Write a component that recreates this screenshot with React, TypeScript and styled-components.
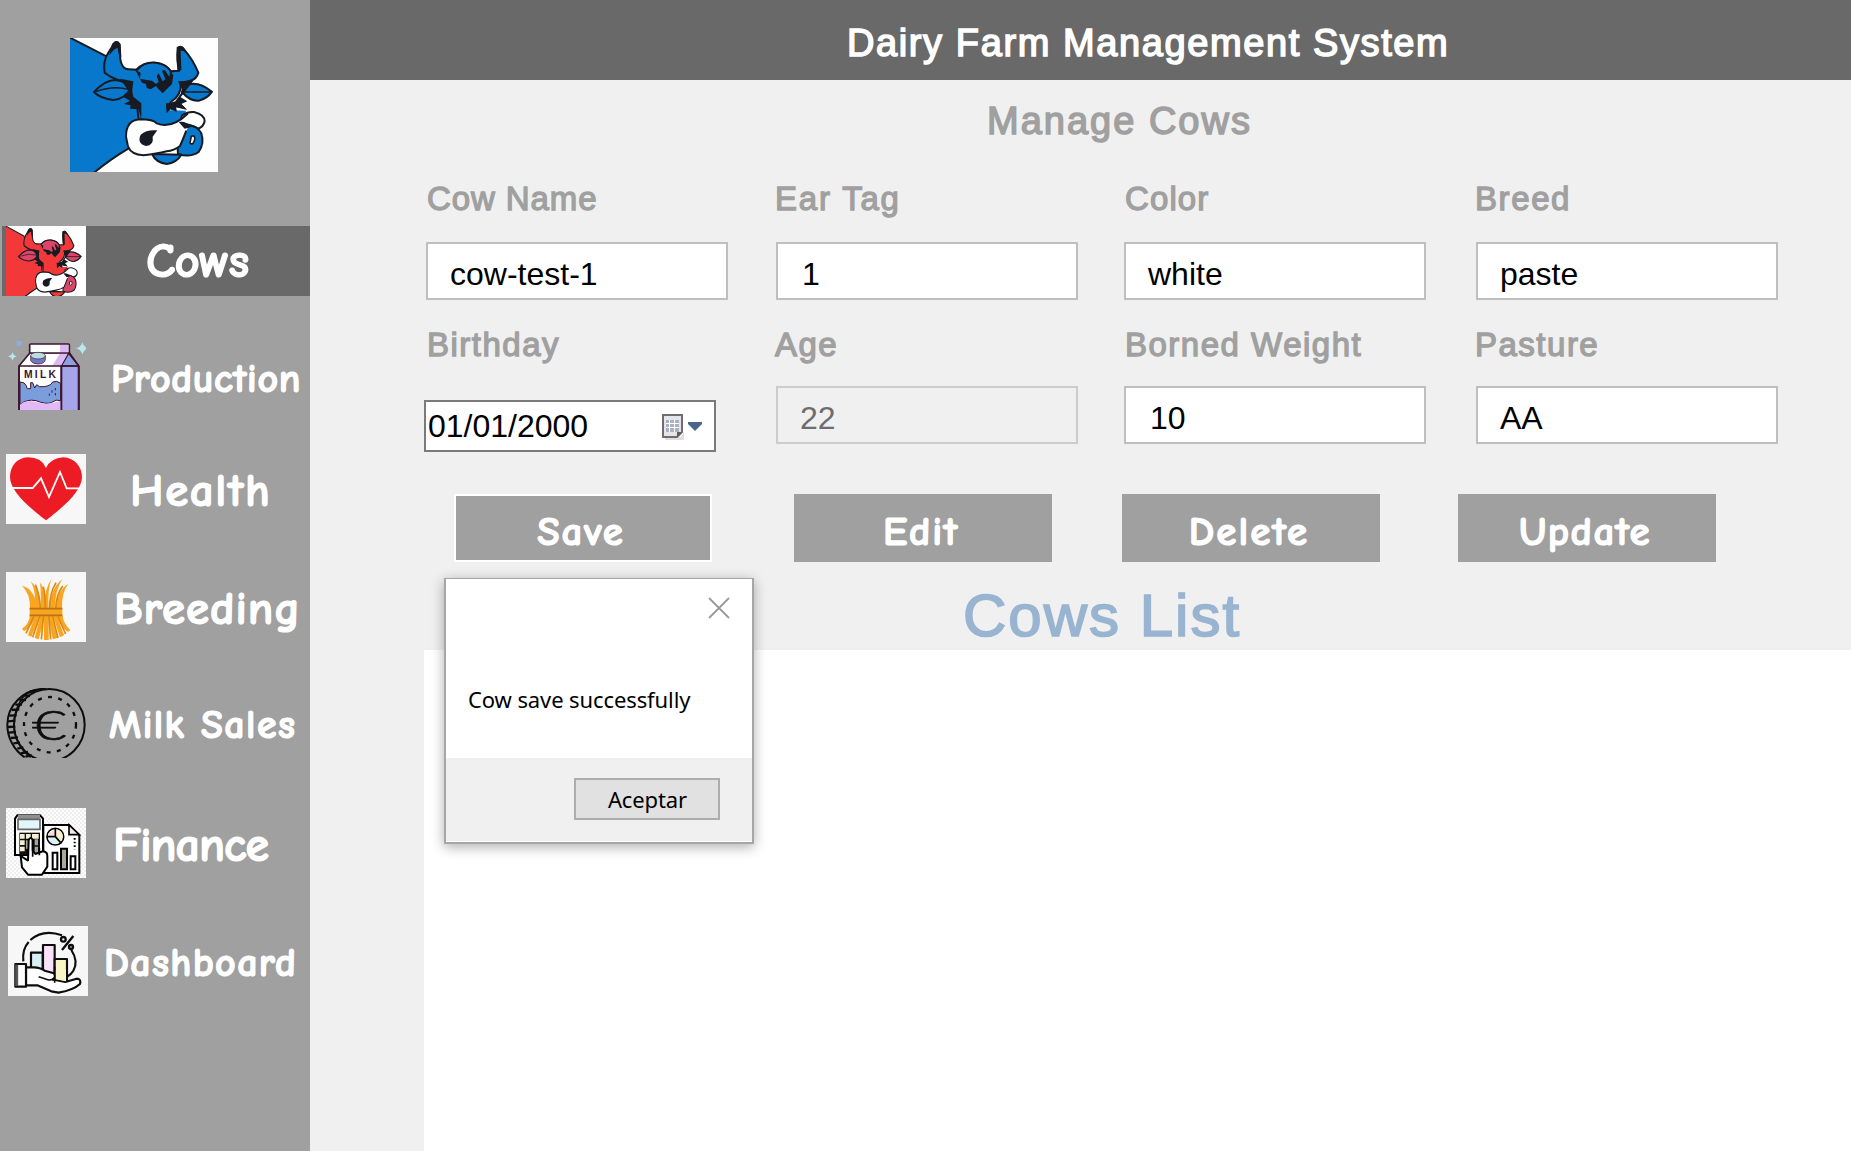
import React from 'react';
import styled, { createGlobalStyle } from 'styled-components';

const sans = '"Liberation Sans", Arial, sans-serif';
const comic = '"Comic Sans MS", "Comic Neue", Roboto, sans-serif';
const dialogFont = '"Segoe UI", "Noto Sans", "Open Sans", sans-serif';

const GlobalStyle = createGlobalStyle`
  * { box-sizing: border-box; }
  body { margin: 0; background: #f0f0f0; overflow: hidden; }
`;

const Page = styled.div`
  display: flex;
  width: 1851px;
  height: 1151px;
  overflow: hidden;
  position: relative;
  font-family: ${sans};
`;

const Sidebar = styled.nav`
  width: 310px;
  flex: none;
  background: #a0a0a0;
  display: flex;
  flex-direction: column;
`;

const Logo = styled.div`
  width: 148px;
  height: 134px;
  margin: 38px 0 54px 70px;
  background: #fefefe;
  svg { display: block; }
`;

const NavItem = styled.a<{ $gap?: number; $active?: boolean; $indent?: number }>`
  display: flex;
  height: 70px;
  flex: none;
  margin-left: 2px;
  margin-top: ${p => p.$gap ?? 0}px;
  padding-left: ${p => p.$indent ?? 4}px;
  background: ${p => (p.$active ? '#696969' : 'transparent')};
`;

const NavIcon = styled.span<{ $bg: string }>`
  width: 80px;
  height: 70px;
  flex: none;
  background: ${p => p.$bg};
  svg { display: block; }
`;

const NavLabel = styled.span<{ $size: number; $left: number; $drop?: number; $track?: number }>`
  padding-left: ${p => p.$left}px;
  padding-top: ${p => p.$drop ?? 0}px;
  font-family: ${comic};
  font-weight: 700;
  font-size: ${p => p.$size}px;
  line-height: 70px;
  height: 70px;
  letter-spacing: ${p => p.$track ?? 0}px;
  color: #fff;
  -webkit-text-stroke: 1.2px #fff;
  white-space: nowrap;
`;

const Main = styled.main`
  flex: 1;
  display: flex;
  flex-direction: column;
  background: #f0f0f0;
`;

const Header = styled.header`
  height: 80px;
  flex: none;
  background: #696969;
  padding: 18px 0 0 537px;
`;

const Title = styled.h1<{ $color: string; $track: number }>`
  margin: 0;
  font-size: 38px;
  font-weight: 400;
  line-height: 51px;
  color: ${p => p.$color};
  -webkit-text-stroke: 1.5px ${p => p.$color};
  letter-spacing: ${p => p.$track}px;
  white-space: nowrap;
`;

const PageTitle = styled.div`
  padding: 16px 0 0 677px;
  height: 98px;
`;

const Form = styled.form`
  display: grid;
  grid-template-columns: 350px 348px 352px 302px;
  grid-template-rows: 146px 122px;
  padding-left: 116px;
  height: 316px;
`;

const Field = styled.div`
  display: flex;
  flex-direction: column;
`;

const Label = styled.label<{ $nudge?: number; $track?: number }>`
  height: 40px;
  line-height: 42px;
  font-size: 33px;
  margin-left: ${p => p.$nudge ?? 0}px;
  color: #a0a0a0;
  -webkit-text-stroke: 1.3px #a0a0a0;
  letter-spacing: ${p => p.$track ?? 1.5}px;
  white-space: nowrap;
`;

const TextBox = styled.div<{ $top: number; $disabled?: boolean; $left?: number }>`
  width: 302px;
  height: 58px;
  margin-top: ${p => p.$top}px;
  padding: 3px 0 0 ${p => p.$left ?? 22}px;
  border: 2px solid ${p => (p.$disabled ? '#cccccc' : '#bfbfbf')};
  background: ${p => (p.$disabled ? '#f0f0f0' : '#fff')};
  color: ${p => (p.$disabled ? '#6d6d6d' : '#000')};
  font-size: 32px;
  line-height: 54px;
`;

const DateBox = styled.div`
  display: flex;
  justify-content: space-between;
  width: 292px;
  height: 52px;
  margin: 36px 0 0 -2px;
  padding: 0 10px 0 2px;
  border: 2px solid #7a7a7a;
  background: #fff;
  font-size: 32px;
  line-height: 49px;
`;

const DateIcon = styled.svg`
  margin-top: 10px;
`;

const Buttons = styled.div`
  display: flex;
  padding-left: 144px;
  height: 68px;
`;

const Button = styled.button<{ $left?: number; $focus?: boolean; $track?: number }>`
  width: 258px;
  height: 68px;
  margin: 0 0 0 ${p => p.$left ?? 0}px;
  padding: 6px 4px 0 0;
  border: ${p => (p.$focus ? '2px solid #fff' : '0')};
  background: #a0a0a0;
  color: #fff;
  font-family: ${comic};
  font-weight: 700;
  font-size: 41px;
  -webkit-text-stroke: 1.2px #fff;
  letter-spacing: ${p => p.$track ?? 1.3}px;
`;

const ListTitle = styled.h2`
  margin: 0;
  padding: 19px 0 0 653px;
  height: 88px;
  font-size: 60px;
  line-height: 70px;
  font-weight: 400;
  color: #99b4d1;
  -webkit-text-stroke: 1.7px #99b4d1;
  letter-spacing: 2px;
`;

const Table = styled.div`
  flex: 1;
  margin-left: 114px;
  background: #fff;
`;

const Dialog = styled.div`
  position: absolute;
  left: 444px;
  top: 578px;
  width: 310px;
  height: 266px;
  display: flex;
  flex-direction: column;
  border: 2px solid #a6a6a6;
  border-top-width: 1px;
  background: #fff;
  box-shadow: 0 3px 12px rgba(0, 0, 0, 0.32);
  font-family: ${dialogFont};
  font-size: 22px;
`;

const DialogTop = styled.div`
  display: flex;
  justify-content: flex-end;
  height: 61px;
  padding: 18px 22px 0 0;
`;

const Message = styled.p`
  margin: 0;
  height: 118px;
  padding: 42px 0 0 22px;
  line-height: 34px;
  letter-spacing: -0.1px;
  white-space: nowrap;
`;

const DialogFooter = styled.div`
  flex: 1;
  display: flex;
  justify-content: flex-end;
  padding: 20px 32px 0 0;
  background: #f0f0f0;
  border-bottom: 1px solid #fff;
`;

const Accept = styled.button`
  width: 146px;
  height: 42px;
  padding: 0 0 0 1px;
  border: 2px solid #adadad;
  background: #e1e1e1;
  font: 22px ${dialogFont};
  line-height: 34px;
  letter-spacing: -0.1px;
  color: #000;
`;

type CowProps = { body: string; accent: string };

const CowDrawing = ({ body, accent }: CowProps) => (
  <g stroke="#171a22" strokeWidth="6" strokeLinejoin="round" strokeLinecap="round">
    <path d="M50 50L165 108L275 250L235 385L125 464L50 464Z" fill={body} stroke="none" />
    <path d="M58 52L165 107M235 386Q185 415 132 458" fill="none" />
    <path d="M190 74Q200 58 208 74L211 118Q216 148 236 148L262 149Q280 128 312 128Q348 130 362 154L388 152Q378 120 384 84Q394 76 402 88Q430 120 445 158Q440 178 420 182L392 190Q396 225 362 246L350 290L350 330L268 330L262 262Q240 235 244 190Q190 180 164 158Q158 125 174 100Z" fill={body} />
    <path d="M186 72Q200 54 212 72L214 110Q206 112 203 84Q194 84 178 106Z M380 82Q394 70 406 90L416 106Q398 88 392 94L394 150L382 152Z" fill="#171a22" stroke="none" />
    <path d="M132 216Q165 180 196 180Q232 184 240 206Q228 236 190 240Q152 236 132 216Z" fill={accent} />
    <path d="M140 214Q190 196 236 208" fill="none" strokeWidth="4" />
    <path d="M486 215Q450 186 420 192Q400 198 396 216Q420 244 446 242Q472 236 486 215Z" fill={accent} />
    <path d="M396 216L484 216" fill="none" strokeWidth="4" />
    <path d="M262 155Q280 128 312 128Q350 132 366 158L368 180Q350 220 336 214Q322 200 310 200Q290 210 264 162Z" fill={accent} stroke="none" />
    <path d="M258 150Q282 124 318 128Q350 132 364 156" fill="none" />
    <path d="M256 150L272 158L270 176L290 180L306 182L318 192L326 186L320 168L326 160L338 184L346 178L336 152L344 150L358 170L360 152L370 166L366 192L338 220L326 208L318 198L302 208L290 204L288 192L276 188Z" fill="#171a22" stroke="none" />
    <path d="M210 176L250 184L244 226L274 250L274 300L266 268L240 266L242 256L222 252L240 242L222 232L238 216Z" fill="#171a22" stroke="none" />
    <path d="M430 182L384 184L398 212L376 244L348 252L352 280L360 268L380 276L378 262L408 266L394 252L412 244L392 232Z" fill="#171a22" stroke="none" />
    <path d="M348 270L408 272L400 300L340 326L290 320Z" fill={body} stroke="none" />
    <path d="M348 250L350 280L362 266L380 276L378 262L412 270L394 252Z" fill="#171a22" stroke="none" />
    <path d="M396 286Q412 274 432 276Q464 284 464 304Q460 322 444 326Q420 310 390 312Z" fill="#fff" />
    <path d="M410 318Q440 314 454 340Q464 370 446 396Q420 414 384 402Q378 340 410 318Z" fill={accent} />
    <path d="M306 402Q318 428 350 432Q380 428 394 404Z" fill={body} />
    <path d="M228 350Q228 300 270 298Q310 298 320 310Q364 328 412 282L424 290L394 306Q424 312 408 334Q398 360 390 378Q372 392 350 394Q320 402 280 406Q244 404 234 380Z" fill="#fff" stroke="none" />
    <path d="M412 282Q364 328 320 310Q310 298 270 298Q228 300 228 350L234 380Q244 404 280 406Q320 402 350 394Q372 392 390 378Q398 360 408 334" fill="none" />
    <path d="M322 331Q290 328 272 344Q260 370 288 378Q312 376 308 350Z" fill="#171a22" stroke="none" />
    <path d="M386 306Q410 302 422 322L404 326Z" fill="#171a22" stroke="none" />
    <path d="M424 349Q436 344 434 360Q428 378 420 368Z" fill="#fff" strokeWidth="5" />
  </g>
);

const BlueCow = () => (
  <svg width="148" height="134" viewBox="60 54 444 402">
    <CowDrawing body="#0878cc" accent="#0878cc" />
  </svg>
);

const RedCow = () => (
  <svg width="80" height="70" viewBox="18 48 240 210">
    <g transform="translate(-14.6 18.5) scale(.531 .561)">
      <CowDrawing body="#f23838" accent="#dc4468" />
    </g>
  </svg>
);

const MilkCarton = () => (
  <svg width="80" height="70" viewBox="18 390 240 210">
    <g stroke="#3c1530" strokeWidth="5" strokeLinejoin="round">
      <path d="M90 428L208 428L236 468L236 606L57 606L57 468Z" fill="#fff" />
      <path d="M206 430L236 468L236 606L184 606L184 468Z" fill="#a5a6ea" />
      <path d="M206 430L184 468L236 468Z" fill="#8da0e0" strokeWidth="4" />
      <path d="M180 430L204 430L184 466L158 466Z" fill="#dcb8f4" stroke="none" />
      <rect x="89" y="402" width="119" height="27" rx="3" fill="#fff" />
      <path d="M180 405H205V426H180Z" fill="#dcb8f4" stroke="none" />
      <path d="M60 516Q74 516 78 526L82 536H92V518L98 518L104 534L110 524L118 530Q150 532 158 516Q170 510 182 520V572Q168 566 154 578Q138 584 108 572Q80 566 60 584Z" fill="#7a9ddc" strokeWidth="3" />
      <path d="M60 602V584Q80 568 108 576Q142 588 182 572V602Z" fill="#e2b9f6" stroke="none" />
      <path d="M57 468H236M184 466V604M57 468V604M236 468V604" fill="none" strokeWidth="5" />
      <path d="M92 438V452Q98 462 114 462Q132 462 136 450V438Z" fill="#7478bd" strokeWidth="2" />
      <ellipse cx="114" cy="437" rx="22" ry="10" fill="#b7dce1" strokeWidth="2" />
      <path d="M166 534V541M156 541V548M166 549V556M148 551V557" fill="none" strokeWidth="3" />
    </g>
    <text x="72" y="504" fontFamily="Liberation Sans, sans-serif" fontWeight="700" fontSize="31" fill="#3c1530" textLength="96">MILK</text>
    <g fill="#b9e7ef">
      <path d="M247 397Q250 412 265 415Q250 419 247 433Q243 419 228 415Q243 412 247 397Z" />
      <path d="M38 426Q40 437 50 439Q40 442 38 452Q35 442 24 439Q35 437 38 426Z" />
      <path d="M50 393L64 393L66 400L60 408L50 405Z" fill="#8eabe9" />
      <path d="M252 452H263V460H254Z" fill="#90a0d6" />
    </g>
  </svg>
);

const Heart = () => (
  <svg width="80" height="70" viewBox="18 42 240 210">
    <path d="M138 84Q125 52 84 52C48 54 30 80 30 112C31 150 74 192 138 241C202 192 245 150 246 112C246 80 224 54 190 52Q152 54 138 84Z" fill="#ed1c24" />
    <path d="M30 144H98L123 115L147 171L180 96L200 145H244" fill="none" stroke="#fff" strokeWidth="5.5" />
  </svg>
);

const Wheat = () => (
  <svg width="80" height="70" viewBox="18 396 240 210">
    <g fill="#f9a51f">
      <path d="M66 437Q88 442 100 464Q112 484 110 508H90Q92 462 66 437Z" />
      <path d="M92 424Q112 442 118 470L122 508H104Q110 456 92 424Z" />
      <path d="M120 428Q136 444 138 508H122Q124 460 120 428Z" />
      <path d="M155 416Q142 444 146 508H132Q132 446 155 416Z" />
      <path d="M188 417Q166 444 164 508H148Q150 446 188 417Z" />
      <path d="M205 431Q184 456 186 508H166Q170 452 205 431Z" />
      <path d="M90 524H106Q104 552 72 574L66 566Q88 552 90 524Z" />
      <path d="M106 524H122L94 590L84 586Z" />
      <path d="M122 524H136L116 598L104 594Z" />
      <path d="M132 524H146V600H132Z" />
      <path d="M144 524H156L172 594L158 598Z" />
      <path d="M158 524H170L192 586L180 592Z" />
      <path d="M172 524H187Q190 550 211 570L204 576Q178 556 172 524Z" />
    </g>
    <g fill="none" stroke="#d98a16" strokeWidth="5">
      <path d="M106 434Q120 466 121 508M130 440Q136 466 136 508M168 428Q148 460 149 508M188 438Q168 464 167 508M104 524L78 580M121 524L98 592M131 524L124 598M146 524L152 598M157 524L174 594M171 524L197 582" />
    </g>
    <rect x="89" y="504" width="98" height="25" fill="#f9a51f" />
    <path d="M89 506H187M89 526H187" stroke="#b97313" strokeWidth="5" />
  </svg>
);

const Coin = () => (
  <svg width="80" height="70" viewBox="18 54 240 210">
    <g fill="none" stroke="#0d0d0d" strokeWidth="6">
      <ellipse cx="148" cy="165" rx="106" ry="108" />
      <path d="M138 56C68 56 22 108 22 164C22 204 42 240 74 262" />
      <path d="M96 62C70 72 42 110 42 164C42 206 62 242 92 262" strokeWidth="4" />
      <path d="M88 66L104 62M72 76L90 78M58 90L78 90M46 104L66 104M36 120L58 118M28 137L50 136M24 154L46 152M24 171L46 170M26 188L48 186M32 204L54 202M40 220L60 218M52 236L70 232M62 250L84 246M76 260L96 256" strokeWidth="7" />
      <ellipse cx="150" cy="164" rx="78" ry="83" strokeDasharray="12 19" strokeWidth="7" />
    </g>
    <text x="96" y="209" fontFamily="Lato, Roboto, sans-serif" fontWeight="300" fontSize="124" textLength="104" lengthAdjust="spacingAndGlyphs" fill="#0d0d0d" stroke="#0d0d0d" strokeWidth="2">€</text>
  </svg>
);

const Checker = ({ id, color }: { id: string; color: string }) => (
  <pattern id={id} width="12" height="12" patternUnits="userSpaceOnUse">
    <rect width="12" height="12" fill="#fdfdfd" />
    <path d="M0 0H6V6H0ZM6 6H12V12H6Z" fill={color} />
  </pattern>
);

const Calculator = () => (
  <svg width="80" height="70" viewBox="18 414 240 210">
    <defs><Checker id="finance-grid" color="#efefef" /></defs>
    <rect x="18" y="414" width="240" height="210" fill="url(#finance-grid)" />
    <g stroke="#000" strokeWidth="6">
      <path d="M130 465H207L238 496V609H130Z" fill="#fff" />
      <path d="M207 465V494H238Z" fill="#fae8e6" strokeWidth="5" />
      <path d="M52 436H120L129 446V555H45V446Z" fill="#fff" />
    </g>
    <path d="M54 434H120V448H54Z" fill="#8f8f8f" />
    <path d="M54 448H120V478H54Z" fill="#e3f7fa" stroke="#666" strokeWidth="5" />
    <path d="M58 488H120V554H58Z" fill="#111" />
    <g fill="#f6efcf">
      <path d="M60 492H74V506H60ZM78 492H92V506H78ZM96 492H116V506H96ZM60 511H74V525H60ZM60 530H74V544H60Z" />
      <path d="M78 511H86V536H78ZM104 508H114V526H104ZM104 530H114V548H104Z" fill="#a4a49a" />
    </g>
    <path d="M62 558L84 572L86 510Q92 498 98 510V542L106 552L122 546L130 544Q142 546 142 558V590L126 614H84L66 592Z" fill="#fff" stroke="#000" strokeWidth="6" strokeLinejoin="bevel" />
    <path d="M98 510V560M118 534V556" stroke="#000" strokeWidth="5" />
    <circle cx="166" cy="500" r="25" fill="#fff" stroke="#000" strokeWidth="5" />
    <path d="M166 477Q189 480 188 502L180 514L166 500Z" fill="#f8efcf" />
    <path d="M146 490L164 478V498H145Z" fill="#f7dede" />
    <path d="M144 504L166 504L178 517Q154 530 144 504Z" fill="#d9f2f6" />
    <path d="M166 476V500H142M166 500L182 518" fill="none" stroke="#000" strokeWidth="5" />
    <g stroke="#000" strokeWidth="6" fill="#fff">
      <path d="M158 548H172V598H158Z" />
      <path d="M183 536H201V598H183Z" fill="#a9aa9a" />
      <path d="M212 559H226V598H212Z" />
      <path d="M224 504V538" strokeDasharray="5 6" />
    </g>
  </svg>
);

const HandChart = () => (
  <svg width="80" height="70" viewBox="24 108 240 210">
    <g fill="none" stroke="#0d0d0d" strokeWidth="6.5" strokeLinejoin="round">
      <path d="M70 214Q66 178 86 156M91 150Q130 116 186 136M214 180Q236 214 220 242Q214 252 202 260" />
      <path d="M93 188H128V240H93Z" fill="#d7f1f4" />
      <path d="M129 165H164V250H129Z" fill="#fae1fb" />
      <path d="M164 207H201V278H164Z" fill="#f8f6c8" />
      <path d="M78 232H102Q120 232 134 242L162 250Q170 262 158 268L196 276L230 266Q244 266 240 282Q220 300 176 308L154 304L112 286H78Z" fill="#fff" />
      <path d="M167 240H198V274L167 268Z" fill="#f8f6c8" stroke="none" />
      <path d="M116 260L146 270L164 268M164 230V278M201 230V276" strokeWidth="5" />
      <path d="M46 222H78V290H46Z" fill="#fff" />
      <path d="M50 224V288" stroke="#555" strokeWidth="9" />
      <path d="M220 138L186 180" strokeWidth="7" />
      <circle cx="190" cy="148" r="7" strokeWidth="7" />
      <circle cx="213" cy="171" r="6" strokeWidth="7" />
    </g>
  </svg>
);

const CalendarIcon = () => (
  <DateIcon width="44" height="30" viewBox="0 0 44 30">
    <path d="M5 25H21L24 20V28H5Z" fill="#c9c9c9" opacity=".6" />
    <path d="M3 3H22V20L17 25H3Z" fill="#e4e6ec" stroke="#756b6b" strokeWidth="2" />
    <path d="M22 20H17V25Z" fill="#655b5b" />
    <path d="M6 8H19V20H6Z" fill="#a9b2c2" />
    <path d="M6 11.5H19M6 15.5H19M9.5 8V20M14.5 8V20" stroke="#fff" strokeWidth="1" />
    <path d="M28 10H42V12L35 19L28 12Z" fill="#49658d" />
  </DateIcon>
);

export default function App() {
  return (
    <Page>
      <GlobalStyle />
      <Sidebar>
        <Logo><BlueCow /></Logo>
        <NavItem $active>
          <NavIcon $bg="#fefefe"><RedCow /></NavIcon>
          <NavLabel $size={49} $left={60} $drop={-2} $track={-0.9}>Cows</NavLabel>
        </NavItem>
        <NavItem $gap={44}>
          <NavIcon $bg="transparent"><MilkCarton /></NavIcon>
          <NavLabel $size={40} $left={25} $drop={4} $track={0.6}>Production</NavLabel>
        </NavItem>
        <NavItem $gap={44}>
          <NavIcon $bg="#f7f7f7"><Heart /></NavIcon>
          <NavLabel $size={47} $left={44} $drop={2} $track={1.6}>Health</NavLabel>
        </NavItem>
        <NavItem $gap={48}>
          <NavIcon $bg="#f7f7f7"><Wheat /></NavIcon>
          <NavLabel $size={47} $left={28} $drop={2} $track={0.9}>Breeding</NavLabel>
        </NavItem>
        <NavItem $gap={46}>
          <NavIcon $bg="transparent"><Coin /></NavIcon>
          <NavLabel $size={40} $left={23} $drop={2} $track={1.4}>Milk Sales</NavLabel>
        </NavItem>
        <NavItem $gap={50}>
          <NavIcon $bg="#fdfdfd"><Calculator /></NavIcon>
          <NavLabel $size={48} $left={27} $drop={3} $track={-1}>Finance</NavLabel>
        </NavItem>
        <NavItem $gap={48} $indent={6}>
          <NavIcon $bg="#f7f7f7"><HandChart /></NavIcon>
          <NavLabel $size={40} $left={16} $drop={2} $track={1.35}>Dashboard</NavLabel>
        </NavItem>
      </Sidebar>
      <Main>
        <Header>
          <Title $color="#fff" $track={1.6}>Dairy Farm Management System</Title>
        </Header>
        <PageTitle>
          <Title as="h2" $color="#a0a0a0" $track={2}>Manage Cows</Title>
        </PageTitle>
        <Form>
          <Field><Label $nudge={1} $track={0.9}>Cow Name</Label><TextBox $top={24}>cow-test-1</TextBox></Field>
          <Field><Label $nudge={-1} $track={1.8}>Ear Tag</Label><TextBox $top={24} $left={24}>1</TextBox></Field>
          <Field><Label $nudge={1} $track={1.1}>Color</Label><TextBox $top={24}>white</TextBox></Field>
          <Field><Label $nudge={-1} $track={1.6}>Breed</Label><TextBox $top={24}>paste</TextBox></Field>
          <Field>
            <Label $nudge={1}>Birthday</Label>
            <DateBox>01/01/2000<CalendarIcon /></DateBox>
          </Field>
          <Field><Label $nudge={-1}>Age</Label><TextBox $top={22} $disabled>22</TextBox></Field>
          <Field><Label $nudge={1}>Borned Weight</Label><TextBox $top={22} $left={24}>10</TextBox></Field>
          <Field><Label $nudge={-1} $track={1.5}>Pasture</Label><TextBox $top={22}>AA</TextBox></Field>
        </Form>
        <Buttons>
          <Button $focus $track={1.9}>Save</Button>
          <Button $left={82} $track={1.7}>Edit</Button>
          <Button $left={70} $track={2.1}>Delete</Button>
          <Button $left={78} $track={1.4}>Update</Button>
        </Buttons>
        <ListTitle>Cows List</ListTitle>
        <Table />
      </Main>
      <Dialog role="dialog">
        <DialogTop>
          <svg width="22" height="22" viewBox="0 0 22 22">
            <path d="M1 1L21 21M21 1L1 21" stroke="#999" strokeWidth="1.8" />
          </svg>
        </DialogTop>
        <Message>Cow save successfully</Message>
        <DialogFooter><Accept>Aceptar</Accept></DialogFooter>
      </Dialog>
    </Page>
  );
}
